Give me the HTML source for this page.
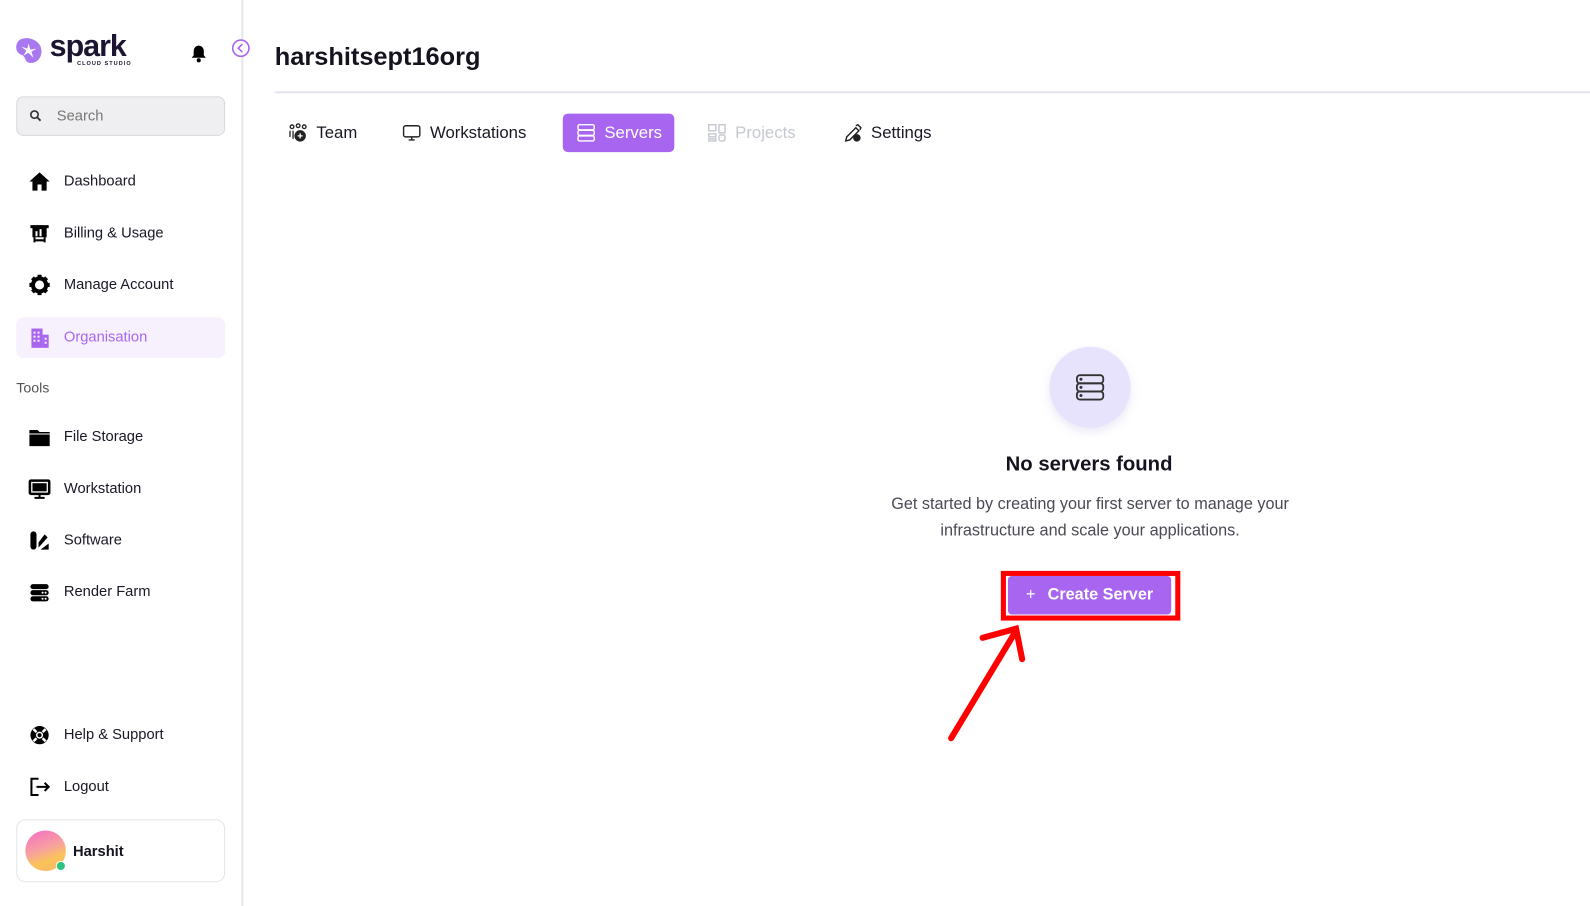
<!DOCTYPE html>
<html><head><meta charset="utf-8">
<style>
*{margin:0;padding:0;box-sizing:border-box}
html,body{width:1590px;height:906px;background:#fff;overflow:hidden}
body{font-family:"Liberation Sans",sans-serif;color:#16131f;position:relative}
#w{position:absolute;left:0;top:0;width:1568px;height:894px;transform:scale(1.01403);transform-origin:0 0}
.abs{position:absolute}
.nav{position:absolute;left:16px;width:206px;height:40px;display:flex;align-items:center;font-size:14.5px;color:#1a1726}
.nav svg{position:absolute;left:12px;width:22px;height:22px}
.nav span{position:absolute;left:47px;top:12px}
.tab{position:absolute;top:112px;height:38px;display:flex;align-items:center;font-size:16.5px;color:#1a1726}
.tab svg{width:20px;height:20px;margin-right:8px}
</style></head><body><div id="w">
<div class="abs" style="left:238px;top:0;width:2px;height:906px;background:#e6e5ec"></div>
<svg class="abs" style="left:14px;top:36px" width="30" height="28" viewBox="0 0 30 28"><path d="M6 3 C14 -1 24 4 26 10 C29 18 24 27 15 26 C10 25 12 20 7 18 C1 16 0 7 6 3Z" fill="#a977ef"/><path d="M14 7 L16 13 L22 12 L17 15 L19 21 L14 16 L9 19 L12 14 L7 10 L13 12Z" fill="#fff"/></svg>
<div class="abs" style="left:49px;top:29px;font-size:30px;font-weight:bold;color:#1c1430;letter-spacing:-1px">spark</div>
<div class="abs" style="left:76px;top:60px;font-size:5.5px;font-weight:bold;color:#1c1430;letter-spacing:1px">CLOUD STUDIO</div>
<svg class="abs" style="left:188px;top:44px" width="16" height="18" viewBox="0 0 16 18"><path d="M8 1c-3 0-5 2.5-5 5.5v4L1 13h14l-2-2.5v-4C13 3.5 11 1 8 1z" fill="#000"/><circle cx="8" cy="15.5" r="2" fill="#000"/></svg>
<svg class="abs" style="left:228px;top:38px" width="19" height="19" viewBox="0 0 19 19"><circle cx="9.5" cy="9.5" r="8" fill="#fff" stroke="#a866f0" stroke-width="1.6"/><path d="M11 5.5 L7 9.5 L11 13.5" fill="none" stroke="#a866f0" stroke-width="1.6"/></svg>
<div class="abs" style="left:16px;top:95px;width:206px;height:39px;background:#efeff1;border:1px solid #d8d8de;border-radius:7px"></div>
<svg class="abs" style="left:29px;top:108px" width="12" height="12" viewBox="0 0 12 12"><circle cx="5" cy="5" r="3.6" fill="none" stroke="#333" stroke-width="1.6"/><path d="M7.5 7.5L11 11" stroke="#333" stroke-width="1.8"/></svg>
<div class="abs" style="left:56px;top:107px;font-size:14.5px;color:#777">Search</div>

<div class="nav" style="top:159px"><svg viewBox="0 0 22 22"><path d="M11 2L1 11h3v9h5v-6h4v6h5v-9h3z" fill="#000"/></svg><span>Dashboard</span></div>
<div class="nav" style="top:210px"><svg viewBox="0 0 22 22"><rect x="2" y="3" width="18" height="3" fill="#000"/><rect x="4" y="5" width="14" height="10" fill="#000"/><rect x="7" y="9" width="2" height="5" fill="#fff"/><rect x="11" y="7" width="2" height="7" fill="#fff"/><path d="M6 15v5M16 15v5M6 18h10" stroke="#000" stroke-width="2"/></svg><span>Billing &amp; Usage</span></div>
<div class="nav" style="top:261px"><svg viewBox="0 0 22 22"><circle cx="11" cy="11" r="6.5" fill="none" stroke="#000" stroke-width="4"/><g stroke="#000" stroke-width="4"><path d="M11 1v4M11 17v4M1 11h4M17 11h4M4 4l3 3M15 15l3 3M4 18l3-3M15 7l3-3"/></g></svg><span>Manage Account</span></div>
<div class="nav" style="top:313px;background:#f6f1fd;border-radius:7px;color:#a866f0"><svg viewBox="0 0 22 22"><rect x="3" y="2" width="11" height="19" fill="#a866f0"/><rect x="14" y="8" width="6" height="13" fill="#a866f0"/><g fill="#f6f1fd"><rect x="5" y="5" width="2" height="2"/><rect x="9" y="5" width="2" height="2"/><rect x="5" y="9" width="2" height="2"/><rect x="9" y="9" width="2" height="2"/><rect x="5" y="13" width="2" height="2"/><rect x="9" y="13" width="2" height="2"/><rect x="16" y="11" width="2" height="2"/><rect x="16" y="15" width="2" height="2"/></g></svg><span>Organisation</span></div>
<div class="abs" style="left:16px;top:374px;font-size:14px;color:#555">Tools</div>
<div class="nav" style="top:411px"><svg viewBox="0 0 22 22"><path d="M1 4h8l2 2h10v14H1z" fill="#000"/><path d="M1 8h20" stroke="#fff" stroke-width="1"/></svg><span>File Storage</span></div>
<div class="nav" style="top:462px"><svg viewBox="0 0 22 22"><rect x="1.5" y="3" width="19" height="13" rx="1" fill="none" stroke="#000" stroke-width="2.5"/><rect x="4" y="5.5" width="14" height="8" fill="#000"/><path d="M11 16v3M6 20h10" stroke="#000" stroke-width="2"/></svg><span>Workstation</span></div>
<div class="nav" style="top:513px"><svg viewBox="0 0 22 22"><rect x="2" y="2" width="6" height="18" rx="3" fill="#000"/><path d="M10 13l6-8 3 3-9 10z M12 20h8v-6z" fill="#000"/></svg><span>Software</span></div>
<div class="nav" style="top:564px"><svg viewBox="0 0 22 22"><rect x="2" y="3" width="18" height="5" rx="2.5" fill="#000"/><rect x="2" y="9" width="18" height="5" rx="2.5" fill="#000"/><rect x="2" y="15" width="18" height="5" rx="2.5" fill="#000"/><circle cx="14" cy="11.5" r="1" fill="#fff"/><circle cx="17" cy="11.5" r="1" fill="#fff"/><circle cx="14" cy="17.5" r="1" fill="#fff"/><circle cx="17" cy="17.5" r="1" fill="#fff"/></svg><span>Render Farm</span></div>
<div class="nav" style="top:705px"><svg viewBox="0 0 22 22"><circle cx="11" cy="11" r="9" fill="#000"/><circle cx="11" cy="11" r="3.5" fill="#fff"/><circle cx="11" cy="11" r="2" fill="#000"/><path d="M5 5l3 3M17 5l-3 3M5 17l3-3M17 17l-3-3" stroke="#fff" stroke-width="2.5"/></svg><span>Help &amp; Support</span></div>
<div class="nav" style="top:756px"><svg viewBox="0 0 22 22"><path d="M10 3H3v16h7" fill="none" stroke="#000" stroke-width="2"/><path d="M8 11h12M16 7l4 4-4 4" fill="none" stroke="#000" stroke-width="2"/></svg><span>Logout</span></div>
<div class="abs" style="left:16px;top:808px;width:206px;height:62px;border:1px solid #e4e4ea;border-radius:9px"></div>
<div class="abs" style="left:25px;top:819px;width:40px;height:40px;border-radius:50%;background:linear-gradient(160deg,#f56bc7 0%,#f7a1a0 45%,#fbc457 70%,#f8b26a 100%)"></div>
<div class="abs" style="left:55px;top:849px;width:10px;height:10px;border-radius:50%;background:#2fc57f;border:1.5px solid #fff"></div>
<div class="abs" style="left:72px;top:832px;font-size:14.5px;font-weight:bold">Harshit</div>

<div class="abs" style="left:271px;top:42px;font-size:25px;font-weight:bold;color:#16131f">harshitsept16org</div>
<div class="abs" style="left:271px;top:90px;width:1319px;height:2px;background:#e4e3ea"></div>

<div class="tab" style="left:284px"><svg viewBox="0 0 20 20" fill="none" stroke="#222" stroke-width="1.3"><circle cx="4" cy="4" r="1.8"/><circle cx="10" cy="3" r="1.8"/><circle cx="16" cy="4" r="1.8"/><path d="M2 8v6M5 8v8"/><circle cx="12" cy="13" r="5" fill="#222"/><path d="M12 10.5v5M9.5 13h5" stroke="#fff"/></svg>Team</div>
<div class="tab" style="left:396px"><svg viewBox="0 0 20 20" fill="none" stroke="#222" stroke-width="1.4"><rect x="2" y="3" width="16" height="11" rx="2"/><path d="M10 14v3M7 17h6"/></svg>Workstations</div>
<div class="tab" style="left:555px;width:110px;background:#a866f0;border-radius:5px;color:#fff;padding-left:13px"><svg viewBox="0 0 20 20" fill="none" stroke="#fff" stroke-width="1.4"><rect x="2" y="2" width="16" height="5" rx="1.5"/><rect x="2" y="7.5" width="16" height="5" rx="1.5"/><rect x="2" y="13" width="16" height="5" rx="1.5"/></svg>Servers</div>
<div class="tab" style="left:697px;color:#c6c8d0"><svg viewBox="0 0 20 20" fill="none" stroke="#c6c8d0" stroke-width="1.4"><rect x="2" y="2" width="7" height="6"/><rect x="12" y="2" width="6" height="8"/><rect x="2" y="11" width="7" height="3"/><rect x="2" y="16" width="7" height="2"/><rect x="12" y="12" width="6" height="6" rx="2"/></svg>Projects</div>
<div class="tab" style="left:831px"><svg viewBox="0 0 20 20" fill="none" stroke="#222" stroke-width="1.4"><path d="M3 18l1-4 9-9 3 3-9 9z"/><path d="M13 3l2-1 3 3-1 2"/><circle cx="14" cy="15" r="3" fill="#222"/></svg>Settings</div>

<div class="abs" style="left:1035px;top:342px;width:80px;height:80px;border-radius:50%;background:#e8e3fd;box-shadow:0 4px 10px rgba(120,100,180,0.15)"></div>
<svg class="abs" style="left:1060px;top:367px" width="30" height="30" viewBox="0 0 30 30" fill="none" stroke="#333" stroke-width="1.8"><rect x="2" y="3" width="26" height="8" rx="3"/><rect x="2" y="11" width="26" height="8" rx="3"/><rect x="2" y="19" width="26" height="8" rx="3"/><circle cx="6" cy="7" r=".6" fill="#333"/><circle cx="6" cy="15" r=".6" fill="#333"/><circle cx="6" cy="23" r=".6" fill="#333"/></svg>
<div class="abs" style="left:874px;top:447px;width:400px;text-align:center;font-size:20px;font-weight:bold;color:#16131f">No servers found</div>
<div class="abs" style="left:845px;top:485px;width:460px;text-align:center;font-size:16px;line-height:26px;color:#4a4a55">Get started by creating your first server to manage your infrastructure and scale your applications.</div>

<div class="abs" style="left:987px;top:563px;width:177px;height:49px;border:5px solid #ff0000"></div>
<div class="abs" style="left:994px;top:568px;width:161px;height:38px;background:#a866f0;border-radius:4px;color:#fff;font-size:16px;font-weight:bold;display:flex;align-items:center;justify-content:center"><span style="font-weight:normal;margin-right:12px">+</span>Create Server</div>
<svg class="abs" style="left:0;top:0" width="1590" height="906"><g stroke="#ff0000" stroke-width="6" stroke-linecap="round" fill="none"><path d="M938 728L1002 622"/><path d="M969 629L1002 620L1008 650"/></g></svg>
</div></body></html>
